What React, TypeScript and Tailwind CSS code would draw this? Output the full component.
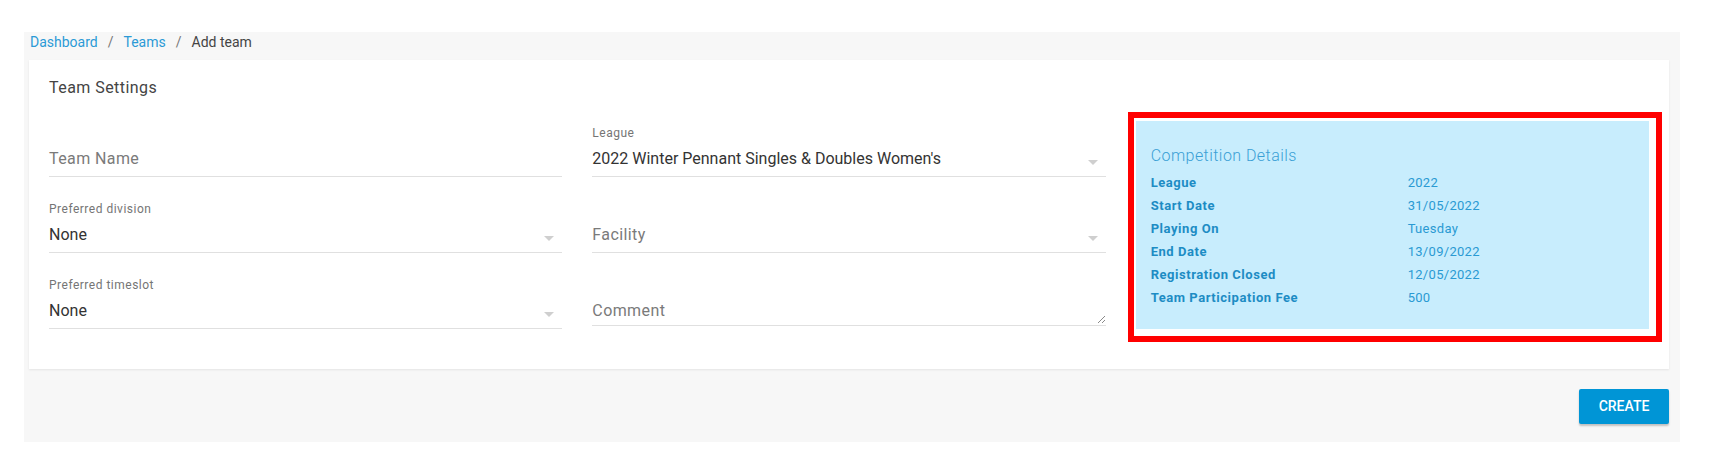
import React from "react";

type FieldProps = {
  label?: string;
  value?: string;
  placeholder?: string;
  select?: boolean;
  textarea?: boolean;
};

function Field({ label, value, placeholder, select, textarea }: FieldProps) {
  return (
    <div>
      <div className="h-[16px] text-[12px] leading-[16px] tracking-[0.5px] text-[#757575]">{label}</div>
      <div
        className={`relative mt-[6px] flex items-center justify-between border-b border-[#e0e0e0] ${
          textarea ? "pb-[2px]" : "pb-[5px]"
        }`}
      >
        {value ? (
          <span className="text-[16px] leading-[24px] text-[#333333]">{value}</span>
        ) : (
          <span className="text-[16px] leading-[24px] tracking-[0.4px] text-[#7a7a7a]">{placeholder}</span>
        )}
        {select && (
          <span className="mr-[8px] translate-y-[3px] border-x-[5px] border-t-[5px] border-x-transparent border-t-[#cfcfcf]" />
        )}
        {textarea && (
          <svg
            className="absolute right-0 bottom-[1px]"
            width="9"
            height="9"
            viewBox="0 0 9 9"
          >
            <path d="M1 8 L8 1 M5 8 L8 5" stroke="#8a8a8a" strokeWidth="1" />
          </svg>
        )}
      </div>
    </div>
  );
}

const details: [string, string][] = [
  ["League", "2022"],
  ["Start Date", "31/05/2022"],
  ["Playing On", "Tuesday"],
  ["End Date", "13/09/2022"],
  ["Registration Closed", "12/05/2022"],
  ["Team Participation Fee", "500"],
];

export default function App() {
  return (
    <div className="min-h-screen bg-white font-['Roboto',sans-serif]">
      <div className="pt-[32px] pl-[24px]">
        <div className="w-[1656px] bg-[#f7f7f7] pl-[5px] pr-[11px] pb-[18px]">
          {/* breadcrumb */}
          <div className="flex h-[20px] items-center pl-[1px] text-[14px] leading-[20px]">
            <span className="text-[#2b9ad6]">Dashboard</span>
            <span className="mx-[10px] text-[#777777]">/</span>
            <span className="text-[#2b9ad6]">Teams</span>
            <span className="mx-[10px] text-[#777777]">/</span>
            <span className="text-[#444444]">Add team</span>
          </div>

          {/* card */}
          <div className="mt-[8px] bg-white px-[20px] pt-[16px] pb-[40px] shadow-[0_1px_2px_rgba(0,0,0,0.08)]">
            <h2 className="text-[16px] leading-[24px] tracking-[0.45px] text-[#444444]">Team Settings</h2>

            <div className="mt-[21px] grid grid-cols-3 gap-x-[30px]">
              <div className="flex flex-col gap-[24px] pt-[4px]">
                <Field placeholder="Team Name" />
                <Field label="Preferred division" value="None" select />
                <Field label="Preferred timeslot" value="None" select />
              </div>

              <div className="flex flex-col gap-[24px] pt-[4px]">
                <Field label="League" value="2022 Winter Pennant Singles & Doubles Women's" select />
                <Field placeholder="Facility" select />
                <Field placeholder="Comment" textarea />
              </div>

              <div className="relative bg-[#c8edfd] pt-[23px] pb-[20px] pl-[15px]">
                <div className="text-[16px] font-light leading-[24px] tracking-[0.45px] text-[#3a9fd5]">
                  Competition Details
                </div>
                <div className="mt-[3px] grid grid-cols-[257px_1fr] text-[13px] leading-[23px]">
                  {details.map(([k, v]) => (
                    <React.Fragment key={k}>
                      <span className="font-bold tracking-[0.55px] text-[#1d8cc4]">{k}</span>
                      <span className="tracking-[0.3px] text-[#2a9ad3]">{v}</span>
                    </React.Fragment>
                  ))}
                </div>
                <span className="pointer-events-none absolute -top-[9px] -right-[13px] -bottom-[13px] -left-[8px] border-[6px] border-[#ff0000]" />
              </div>
            </div>
          </div>

          <div className="mt-[20px] flex justify-end">
            <button className="h-[35px] w-[90px] rounded-[2px] bg-[#0095d6] text-[14px] font-medium uppercase text-white shadow-[0_2px_2px_rgba(0,0,0,0.22)]">
              Create
            </button>
          </div>
        </div>
      </div>
    </div>
  );
}
